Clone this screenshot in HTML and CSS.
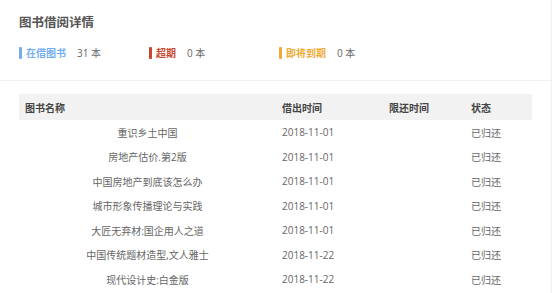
FILE: index.html
```html
<!DOCTYPE html>
<html lang="zh-CN">
  <head>
    <meta charset="UTF-8" />
    <meta name="viewport" content="width=device-width, initial-scale=1.0" />
    <title>图书借阅详情</title>
    <link rel="stylesheet" href="styles.css">
  </head>
  <body>
    <div class="page">
      <div class="summary">
        <h1 class="title">图书借阅详情</h1>
        <div class="stats">
          <div class="stat stat-borrow">
            <span class="stat-label">在借图书</span>
            <span class="stat-value">31 本</span>
          </div>
          <div class="stat stat-overdue">
            <span class="stat-label">超期</span>
            <span class="stat-value">0 本</span>
          </div>
          <div class="stat stat-soon">
            <span class="stat-label">即将到期</span>
            <span class="stat-value">0 本</span>
          </div>
        </div>
      </div>

      <table class="records">
        <colgroup>
          <col class="col-name" />
          <col class="col-out" />
          <col class="col-due" />
          <col class="col-state" />
        </colgroup>
        <thead>
          <tr>
            <th>图书名称</th>
            <th>借出时间</th>
            <th>限还时间</th>
            <th>状态</th>
          </tr>
        </thead>
        <tbody>
          <tr><td class="name">重识乡土中国</td><td>2018-11-01</td><td></td><td>已归还</td></tr>
          <tr><td class="name">房地产估价.第2版</td><td>2018-11-01</td><td></td><td>已归还</td></tr>
          <tr><td class="name">中国房地产到底该怎么办</td><td>2018-11-01</td><td></td><td>已归还</td></tr>
          <tr><td class="name">城市形象传播理论与实践</td><td>2018-11-01</td><td></td><td>已归还</td></tr>
          <tr><td class="name">大匠无弃材:国企用人之道</td><td>2018-11-01</td><td></td><td>已归还</td></tr>
          <tr><td class="name">中国传统题材造型,文人雅士</td><td>2018-11-22</td><td></td><td>已归还</td></tr>
          <tr><td class="name">现代设计史:白金版</td><td>2018-11-22</td><td></td><td>已归还</td></tr>
        </tbody>
      </table>
    </div>
  </body>
</html>
```

FILE: styles.css
```css
body {
  margin: 0;
  font-family: "Open Sans", "Noto Sans CJK SC", sans-serif;
  background-color: #fff;
  color: #666;
  overflow: hidden;
}

.page {
  width: 551px;
  height: 293px;
  border-right: 1px solid #f0f0f0;
}

.summary {
  padding: 13px 0 21px 19px;
  border-bottom: 1px solid #f0f0f0;
}

.title {
  margin: 0;
  font-size: 12.5px;
  line-height: 19px;
  font-weight: bold;
  color: #555;
}

.stats {
  display: flex;
  margin-top: 15px;
}

.stat {
  display: flex;
  align-items: center;
  width: 130px;
  height: 12px;
  font-size: 10px;
  line-height: 12px;
}

.stat::before {
  content: "";
  width: 3px;
  height: 12px;
  border-radius: 1px;
  margin-right: 4px;
}

.stat-label {
  font-weight: bold;
  margin-right: 11px;
}

.stat-value {
  color: #666;
}

.stat-borrow .stat-label {
  color: #74aef2;
}

.stat-borrow::before {
  background-color: #74aef2;
}

.stat-overdue .stat-label {
  color: #c9472f;
}

.stat-overdue::before {
  background-color: #c9472f;
}

.stat-soon .stat-label {
  color: #eeab36;
}

.stat-soon::before {
  background-color: #eeab36;
}

.records {
  margin: 13px 0 0 19px;
  width: 513px;
  border-collapse: collapse;
  table-layout: fixed;
  font-size: 10px;
}

.col-name {
  width: 257px;
}

.col-out {
  width: 107px;
}

.col-due {
  width: 82px;
}

.col-state {
  width: 67px;
}

.records th {
  height: 26px;
  padding: 0 0 0 6px;
  background-color: #f2f2f2;
  text-align: left;
  font-weight: bold;
  color: #444;
}

.records td {
  height: 24.5px;
  padding: 0 0 0 6px;
  color: #666;
  white-space: nowrap;
}

.records td.name {
  padding: 0;
  text-align: center;
}
```
